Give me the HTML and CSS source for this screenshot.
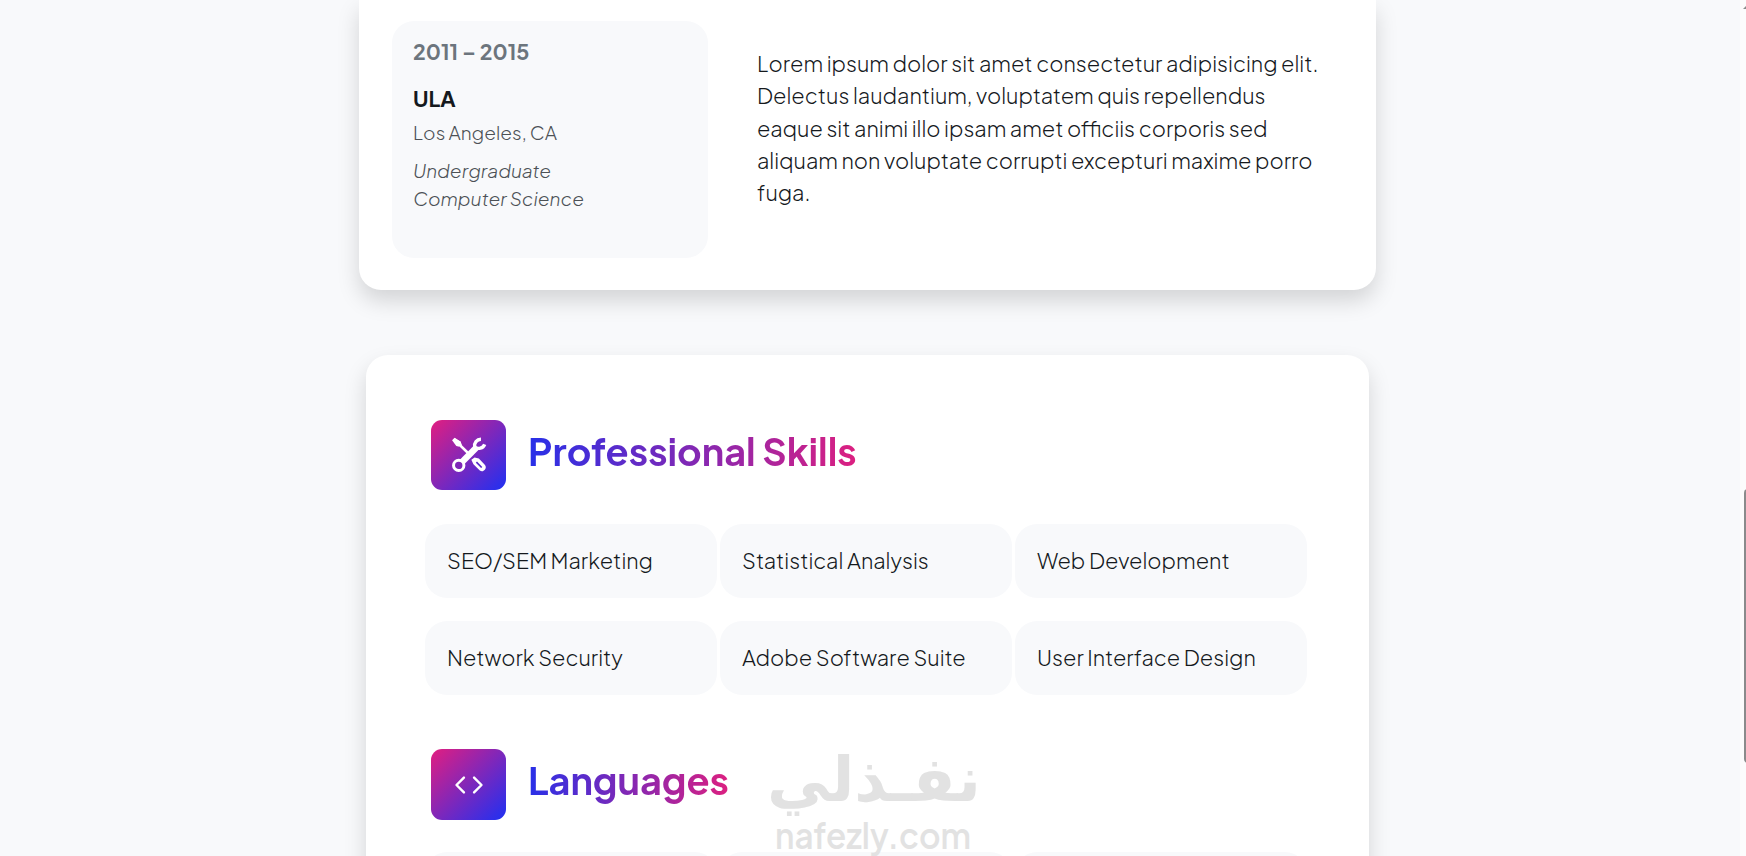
FILE: index.html
```
<!DOCTYPE html>
<html lang="en">
<head>
  <meta charset="UTF-8">
  <meta name="viewport" content="width=device-width, initial-scale=1.0">
  <title>Resume</title>
  <link rel="stylesheet" href="styles.css">
</head>
<body>
  <main class="page">
    <!-- Education -->
    <section class="card education">
      <div class="school">
        <div class="years">2011 – 2015</div>
        <div class="name">ULA</div>
        <div class="place">Los Angeles, CA</div>
        <div class="degree">Undergraduate<br>Computer Science</div>
      </div>
      <p class="about">Lorem ipsum dolor sit amet consectetur adipisicing elit. Delectus laudantium, voluptatem quis repellendus eaque sit animi illo ipsam amet officiis corporis sed aliquam non voluptate corrupti excepturi maxime porro fuga.</p>
    </section>

    <!-- Skills -->
    <section class="card skills">
      <div class="section-title">
        <div class="feature">
          <svg width="36" height="36" viewBox="0 0 34 34" fill="none" stroke="#fff">
            <path d="M2.5 2 L8 5 L9.5 8.7 L17.5 16.5" stroke-width="2.4"/>
            <path d="M1 3 L3.5 .8 L9.2 4.6 L9.8 7.5 L8 9.2 L5 8.6 Z" fill="#fff" stroke="none"/>
            <path d="M9.5 24.5 L24.5 9.5" stroke-width="6"/>
            <path d="M28.3 2.1 A6 6 0 0 0 22.4 9.4 A6 6 0 0 0 31.8 6.9" stroke-width="3.2"/>
            <circle cx="7.3" cy="26.8" r="4.9" fill="#7d27b7" stroke-width="2.8"/>
            <path d="M19.2 21.6 L22.3 19.3 L26.3 20.4 L32.1 26.5 C33.3 28 33 29.8 31.9 31 C30.8 32.4 29 33 27.2 31.7 L21.2 25.8 Z" fill="#fff" stroke="none"/>
            <path d="M24 23.8 L29 28.8" stroke="#5529ca" stroke-width="1.6"/>
          </svg>
        </div>
        <h2>Professional Skills</h2>
      </div>
      <div class="grid">
        <div class="item">SEO/SEM Marketing</div>
        <div class="item">Statistical Analysis</div>
        <div class="item">Web Development</div>
        <div class="item">Network Security</div>
        <div class="item">Adobe Software Suite</div>
        <div class="item">User Interface Design</div>
      </div>

      <div class="section-title languages">
        <div class="feature">
          <svg width="36" height="36" viewBox="0 0 34 34" fill="none" stroke="#fff" stroke-width="2.3" stroke-linecap="round" stroke-linejoin="round">
            <path d="M12.2 10 L5.2 17 L12.2 24"/>
            <path d="M21.8 10 L28.8 17 L21.8 24"/>
          </svg>
        </div>
        <h2>Languages</h2>
      </div>
      <div class="grid">
        <div class="item"></div>
        <div class="item"></div>
        <div class="item"></div>
      </div>
    </section>
  </main>

  <svg class="watermark" width="250" height="114" viewBox="0 0 250 114" fill="#e2e2e2">
    <text class="mark-ar" x="126" y="59" text-anchor="middle" direction="rtl" textLength="214" lengthAdjust="spacingAndGlyphs">نفـذلي</text>
    <text class="mark-en" x="27" y="107" textLength="196" lengthAdjust="spacingAndGlyphs">nafezly.com</text>
  </svg>

  <div class="scrollbar">
    <div class="arrow"></div>
    <div class="thumb"></div>
  </div>
</body>
</html>
```
FILE: styles.css
```
* {
  box-sizing: border-box;
}

body, html {
  margin: 0;
  padding: 0;
  height: 100%;
  overflow: hidden;
}

body {
  font-family: 'Plus Jakarta Sans', Inter, sans-serif;
  font-size: 21.6px;
  font-weight: 300;
  line-height: 32.25px;
  color: #15191d;
  background: #f8f9fb;
}

.page {
  display: flex;
  flex-direction: column;
  gap: 65px;
  width: 1017px;
  height: 856px;
  margin-left: 359px;
  overflow: visible;
}

.card {
  flex-shrink: 0;
  background: #fff;
  box-shadow: 0 11px 22px rgba(0, 0, 0, 0.15);
}

/* Education */
.education {
  display: flex;
  align-items: flex-start;
  height: 290px;
  padding: 21px 33px 0;
  border-radius: 0 0 22px 22px;
}

.school {
  flex-shrink: 0;
  width: 316px;
  height: 237px;
  padding: 15px 21px;
  border-radius: 22px;
  background: #f8f9fb;
}

.years {
  font-size: 21.4px;
  font-weight: 700;
  color: #6c757d;
}

.name {
  margin-top: 15px;
  font-weight: 700;
}

.place,
.degree {
  font-size: 19px;
  line-height: 28px;
  color: #4c5156;
}

.place {
  margin-top: 2px;
}

.degree {
  margin-top: 10px;
  font-style: italic;
}

.about {
  width: 568px;
  margin: 27px 0 0 49px;
}

/* Skills */
.skills {
  width: 1003px;
  height: 600px;
  margin-left: 7px;
  padding: 65px 59px 0;
  border-radius: 22px;
}

.section-title {
  display: flex;
  gap: 22px;
  height: 70px;
  padding-left: 6px;
}

.feature {
  display: flex;
  align-items: center;
  justify-content: center;
  width: 75px;
  height: 70px;
  border-radius: 11px;
  background: linear-gradient(135deg, #e21e80 0%, #1e30f3 100%);
}

h2 {
  height: 60px;
  margin: 3px 0 0;
  font-size: 37.8px;
  font-weight: 700;
  line-height: 56px;
  background: linear-gradient(to right, #2830e8 0%, #dc2080 100%);
  -webkit-background-clip: text;
  background-clip: text;
  color: transparent;
}

.grid {
  display: grid;
  grid-template-columns: repeat(3, 292px);
  gap: 23px 3px;
  margin-top: 34px;
}

.item {
  height: 74px;
  padding: 21px 22px;
  border-radius: 22px;
  background: #f8f9fb;
}

.languages {
  margin-top: 54px;
}

.languages .feature {
  height: 71px;
}

.languages + .grid {
  margin-top: 33px;
}

/* Watermark over the page */
.watermark {
  position: absolute;
  left: 748px;
  top: 742px;
}

.mark-ar {
  font-family: 'DejaVu Sans', sans-serif;
  font-size: 62px;
  font-weight: bold;
}

.mark-en {
  font-family: 'Plus Jakarta Sans', Inter, sans-serif;
  font-size: 36px;
  font-weight: 600;
}

/* Scrollbar */
.scrollbar {
  position: absolute;
  top: 0;
  right: 0;
  width: 6px;
  height: 856px;
  overflow: hidden;
  background: #fcfcfc;
}

.arrow {
  width: 8px;
  height: 3px;
  margin: 6px 0 0 3px;
  background: #8b8b8b;
  clip-path: polygon(0 100%, 3px 0, 100% 0, 100% 100%);
}

.thumb {
  width: 8px;
  height: 274px;
  margin: 480px 0 0 4px;
  border-radius: 4px;
  background: #8b8b8b;
}
```
